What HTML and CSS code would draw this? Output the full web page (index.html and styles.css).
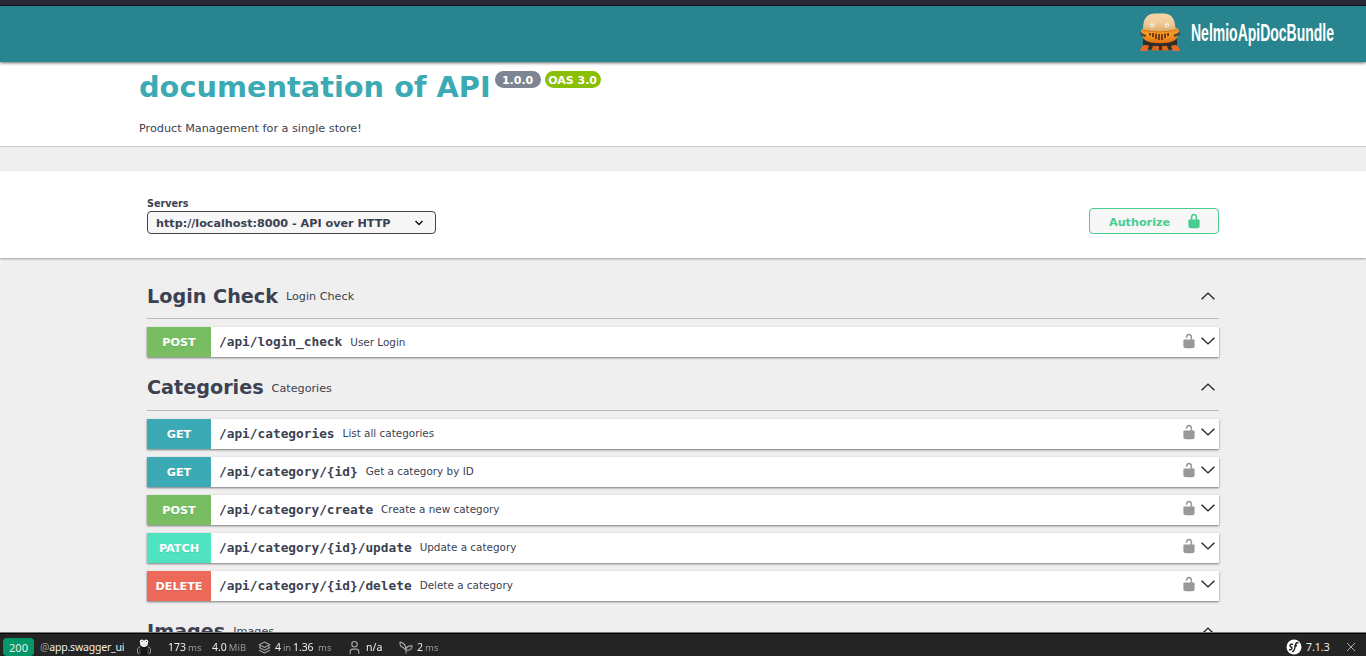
FILE: index.html
```html
<!DOCTYPE html>
<html lang="en">
<head>
<meta charset="utf-8">
<title>documentation of API</title>
<link rel="stylesheet" href="styles.css">
</head>
<body>
<svg class="defs" width="0" height="0">
  <symbol id="up" viewBox="0 0 14 8"><path d="M.6 7.3 7 1.1l6.4 6.2" fill="none" stroke="#222" stroke-width="1.4"/></symbol>
  <symbol id="down" viewBox="0 0 14 8"><path d="M.6.7 7 6.9 13.4.7" fill="none" stroke="#222" stroke-width="1.4"/></symbol>
  <symbol id="unlocked" viewBox="0 0 20 20"><path d="M15.8 8H14V5.6C14 2.703 12.665 1 10 1 7.334 1 6 2.703 6 5.6V6h2v-.801C8 3.754 8.797 3 10 3c1.203 0 2 .754 2 2.199V8H4c-.553 0-1 .646-1 1.199V17c0 .549.428 1.139.951 1.307l1.197.387C5.672 18.861 6.55 19 7.1 19h5.8c.549 0 1.428-.139 1.951-.307l1.196-.387c.524-.167.953-.757.953-1.306V9.199C17 8.646 16.352 8 15.8 8z"/></symbol>
  <symbol id="locked" viewBox="0 0 20 20"><path d="M15.8 8H14V5.6C14 2.703 12.665 1 10 1 7.334 1 6 2.703 6 5.6V8H4c-.553 0-1 .646-1 1.199V17c0 .549.428 1.139.951 1.307l1.197.387C5.672 18.861 6.55 19 7.1 19h5.8c.549 0 1.428-.139 1.951-.307l1.196-.387c.524-.167.953-.757.953-1.306V9.199C17 8.646 16.352 8 15.8 8zM12 8H8V5.199C8 3.754 8.797 3 10 3c1.203 0 2 .754 2 2.199V8z"/></symbol>
</svg>
<div class="strip"></div>
<header class="header">
  <svg class="robot" width="40" height="38" viewBox="0 0 40 38">
    <defs>
      <linearGradient id="skin" x2="0" y2="1"><stop stop-color="#f8d6a5"/><stop offset=".55" stop-color="#eecb98"/><stop offset="1" stop-color="#dca966"/></linearGradient>
      <linearGradient id="shell" x2="0" y2="1"><stop stop-color="#e58b20"/><stop offset=".4" stop-color="#fa9b28"/><stop offset="1" stop-color="#e0700f"/></linearGradient>
    </defs>
    <path d="M3 26h34v9l-8 2H11l-8-2z" fill="#332e2a"/>
    <path d="M2 33q4-2 7 0l-2 5H0zM31 33q4-2 7 0l2 5h-7z" fill="#ed6820"/>
    <path d="M13 33h6v4.500h-8zM22 33h5l2 4.500h-7z" fill="#e06415"/>
    <path d="M1 17Q5 14 8 15h25q4-1 6 2l-1 6q-2 5-9 6.500-9 1.500-18 0-7-1.500-9-6.500z" fill="url(#shell)"/>
    <path d="M3 16.500C3 5 7 1 15 .5h9.500C32 1 35 6 35.500 16.500q-16 4-32.500 0z" fill="url(#skin)"/>
    <path d="M3 17q16 4 33 0" fill="none" stroke="#d77818"/>
    <path d="M0 19 6 22v2l-5-1zM40 19l-7 3 2 2 5-2z" fill="#504a45"/>
    <path d="M10 20v2.500M13 20v4M16 20.500V26M19 21v6M22 21v6M25 20.500V25M28 20v3" stroke="#6b3510" stroke-width="1.800"/>
    <circle cx="12" cy="12.300" r="2.100" fill="#fff5e8"/><circle cx="27" cy="12.300" r="2.100" fill="#fff5e8"/>
    <circle cx="12" cy="12.500" r=".7" fill="#99887d"/><circle cx="27" cy="12.500" r=".7" fill="#99887d"/>
  </svg>
  <svg class="brand" width="146" height="36" viewBox="0 0 146 36"><text x="1" y="24" textLength="143" lengthAdjust="spacingAndGlyphs">NelmioApiDocBundle</text></svg>
</header>
<section class="info">
  <h1 class="title">documentation of API</h1>
  <span class="badge version">1.0.0</span><span class="badge oas">OAS 3.0</span>
  <p class="description">Product Management for a single store!</p>
</section>
<section class="schemes">
  <div class="servers">
    <label class="label">Servers</label>
    <div class="select"><span>http://localhost:8000 - API over HTTP</span><svg width="10" height="6" viewBox="0 0 10 6"><path d="m1.500 1 3.500 3.500L8.500 1" fill="none" stroke="#111" stroke-width="1.500"/></svg></div>
  </div>
  <button class="authorize"><span>Authorize</span><svg width="16" height="16"><use href="#locked"/></svg></button>
</section>
<main class="operations">
  <div class="tag"><h2>Login Check</h2><small>Login Check</small><svg class="arrow"><use href="#up"/></svg></div>
  <div class="op"><b class="method post">POST</b><span class="path">/api/login_check</span><span class="summary first">User Login</span><svg class="lock"><use href="#unlocked"/></svg><svg class="arrow"><use href="#down"/></svg></div>
  <div class="tag next"><h2>Categories</h2><small class="low">Categories</small><svg class="arrow"><use href="#up"/></svg></div>
  <div class="op"><b class="method get">GET</b><span class="path">/api/categories</span><span class="summary">List all categories</span><svg class="lock"><use href="#unlocked"/></svg><svg class="arrow"><use href="#down"/></svg></div>
  <div class="op"><b class="method get">GET</b><span class="path">/api/category/{id}</span><span class="summary">Get a category by ID</span><svg class="lock"><use href="#unlocked"/></svg><svg class="arrow"><use href="#down"/></svg></div>
  <div class="op"><b class="method post">POST</b><span class="path">/api/category/create</span><span class="summary">Create a new category</span><svg class="lock"><use href="#unlocked"/></svg><svg class="arrow"><use href="#down"/></svg></div>
  <div class="op"><b class="method patch">PATCH</b><span class="path">/api/category/{id}/update</span><span class="summary">Update a category</span><svg class="lock"><use href="#unlocked"/></svg><svg class="arrow"><use href="#down"/></svg></div>
  <div class="op"><b class="method delete">DELETE</b><span class="path">/api/category/{id}/delete</span><span class="summary">Delete a category</span><svg class="lock"><use href="#unlocked"/></svg><svg class="arrow"><use href="#down"/></svg></div>
  <div class="tag next"><h2>Images</h2><small>Images</small><svg class="arrow"><use href="#up"/></svg></div>
</main>
<footer class="toolbar">
  <span class="status">200</span>
  <span class="route"><i>@</i>app.swagger_ui</span>
  <svg class="ghost" width="16" height="16" viewBox="0 0 16 16"><path d="M4 8Q1 8 1.500 13l1 2M12 8q3 0 2.500 5l-1 2" fill="none" stroke="#999"/><path d="M4 16V7h8v9z" fill="#181818"/><path d="M4 4q0-2.500 4-2.500T12 4q0 4-4 4T4 4z" fill="#e8e8e8"/><circle cx="5.800" cy="2.500" r="2" fill="#fff"/><circle cx="10.200" cy="2.500" r="2" fill="#fff"/><path d="M5.500 2.500h1M10 2.500h1" stroke="#333"/><path d="M4 9.500v6M12 9.500v6" fill="none" stroke="#555"/></svg>
  <span class="time">173<i>ms</i></span>
  <span class="memory">4.0<i>MiB</i></span>
  <svg class="layers" width="13" height="13" viewBox="0 0 24 24"><path d="m12 2 10 5-10 5L2 7zM2 12l10 5 10-5M2 17l10 5 10-5M5 10l-3 2M19 10l3 2"/></svg>
  <span class="cache">4<i>in</i>1.36 <i>ms</i></span>
  <svg class="person" width="13" height="13" viewBox="0 0 24 24"><circle cx="12" cy="6" r="5"/><path d="M4 24v-4q0-5 5-5h6q5 0 5 5v4"/></svg>
  <span class="user">n/a</span>
  <svg class="twig" width="14" height="13" viewBox="0 0 26 24"><path d="M13 23v-6q0-7 8-8h3q1 9-11 8C13 9 9 3 2 2q-1 9 6 10l5 5"/></svg>
  <span class="render">2<i>ms</i></span>
  <svg class="symfony" width="16" height="16" viewBox="0 0 16 16"><circle cx="8" cy="8" r="7.500" fill="#fff"/><path d="M7 5.500C4 4.500 3 7 5 8s1 3.500-2 2.500M12.500 4C10 3 9.500 5 9 8s-1.500 5-3 4.500M8 7.300l3-.8" fill="none" stroke="#222" stroke-width="1.400"/></svg>
  <span class="release">7.1.3</span>
  <svg class="close" width="10" height="10" viewBox="0 0 10 10"><path d="m1 1 8 8M9 1 1 9"/></svg>
</footer>
</body>
</html>
```
FILE: styles.css
```css
* { box-sizing: border-box; }
body { margin: 0; height: 656px; overflow: hidden; background: #efefef; color: #3b4151; font-family: "DejaVu Sans", sans-serif; }
svg { display: block; flex: none; }
.defs { position: absolute; }
.strip { height: 6px; background: #2a2833; border-bottom: 1px solid #0b1a20; }
.header { position: relative; z-index: 1; display: flex; height: 56px; padding: 7px 30px 0 0; justify-content: flex-end; background: #28858f; box-shadow: 0 1px 3px rgba(0,0,0,.6); }
.robot { margin-right: 10px; }
.brand { margin-top: 4px; overflow: visible; }
.brand text { fill: #fff; font: 700 24px "Liberation Sans Narrow", "Liberation Sans", sans-serif; }
.info { display: flex; flex-wrap: wrap; align-content: flex-start; height: 85px; padding: 8px 139px 0; background: #fff; border-bottom: 1px solid #c8c8c8; }
.title { margin: 0; color: #3caab5; font-size: 28.8px; line-height: 34px; font-weight: 700; white-space: nowrap; }
.badge { height: 17px; margin: 1px 0 0 4px; border-radius: 9px; color: #fff; font-size: 11px; line-height: 19px; font-weight: 700; text-align: center; white-space: nowrap; }
.version { width: 46px; background: #7d8492; }
.oas { width: 56px; background: #89bf04; }
.description { width: 100%; margin: 18px 0 0; font-size: 11.2px; line-height: 14px; letter-spacing: .015px; }
.schemes { display: flex; height: 87px; margin-top: 24px; padding: 26px 147px 0; justify-content: space-between; background: #fff; box-shadow: 0 1px 2px rgba(0,0,0,.35); }
.label { display: block; height: 14px; font-size: 9.6px; line-height: 14px; font-weight: 700; }
.select { display: flex; width: 289px; height: 23px; padding: 0 11px 0 8px; align-items: center; justify-content: space-between; border: 1px solid #41444e; border-radius: 4px; background: #f7f7f7; font-size: 11.2px; font-weight: 700; white-space: nowrap; }
.select span, .authorize span { padding-top: 2px; }
.authorize { display: flex; width: 130px; height: 26px; margin-top: 11px; padding: 0 16px 0 19px; align-items: center; justify-content: space-between; border: 1px solid #49cc90; border-radius: 4px; background: #f7f7f7; color: #49cc90; fill: #49cc90; font: 700 11.2px "DejaVu Sans", sans-serif; }
.operations { height: 374px; padding: 17px 147px 0; overflow: hidden; }
.tag { display: flex; height: 44px; padding-right: 4px; align-items: center; border-bottom: 1px solid #b8b9bb; }
.next { margin-top: 10px; }
.tag h2 { margin: 0 8px 0 0; font-size: 19.2px; line-height: 24px; }
.next h2 { margin-bottom: 2px; }
.tag small { font-size: 11.2px; line-height: 16px; }
.next small { margin-bottom: 2px; }
.tag .low { margin-bottom: 0; }
.arrow { width: 14px; height: 8px; margin: 0 0 2px auto; }
.next .arrow { margin-bottom: 4px; }
.op { display: flex; height: 30px; margin-top: 8px; padding-right: 4px; align-items: center; background: #fff; box-shadow: 0 1px 2px rgba(0,0,0,.5); }
.method { width: 64px; height: 30px; color: #fff; font-size: 11.2px; line-height: 31px; text-align: center; text-shadow: 0 1px 0 rgba(0,0,0,.1); }
.post { background: #78bd61; }
.get { background: #3caab5; }
.patch { background: #50e3c2; }
.delete { background: #ed6a5a; }
.path { margin: 0 8px 2px; font: 700 12.8px "DejaVu Sans Mono", monospace; }
.summary { margin-bottom: 2px; font-size: 10.4px; letter-spacing: .01px; }
.summary.first { margin-bottom: 0; }
.lock { width: 16px; height: 16px; margin: 0 0 2px auto; fill: #999; }
.lock + .arrow { margin: 0 0 2px 4px; }
.next ~ .op .lock, .next ~ .op .arrow { margin-bottom: 4px; }
.toolbar { position: fixed; left: 0; right: 0; top: 632px; z-index: 2; display: flex; height: 24px; padding: 5px 10px 0 3px; align-items: center; border-top: 1px solid #777; background: #242424; box-shadow: inset 0 1px #050505; color: #eee; font: 10.5px/18px "Noto Sans", sans-serif; white-space: nowrap; }
.toolbar i { color: #999; font-style: normal; }
.status { width: 31px; height: 18px; margin-right: 6px; border-radius: 4px; background: #059669; text-align: center; line-height: 19px; font-size: 11px; }
.route { width: 96px; letter-spacing: -.2px; }
.ghost { margin-right: 16px; }
.time { width: 44px; }
.time i, .render i { margin-left: 2px; font-size: 9.5px; }
.memory { width: 46px; }
.memory i { margin-left: 2px; font-size: 9.5px; }
.layers, .person, .twig { fill: none; stroke: #aaa; stroke-width: 2; }
.cache { width: 73px; margin-left: 4px; letter-spacing: -.1px; }
.cache i { margin: 0 2px; font-size: 9.5px; }
.user { width: 33px; margin-left: 5px; }
.render { margin-left: 4px; }
.symfony { margin-left: auto; }
.release { width: 34px; margin-left: 4px; }
.close { margin-left: 6px; fill: none; stroke: #aaa; }
```
